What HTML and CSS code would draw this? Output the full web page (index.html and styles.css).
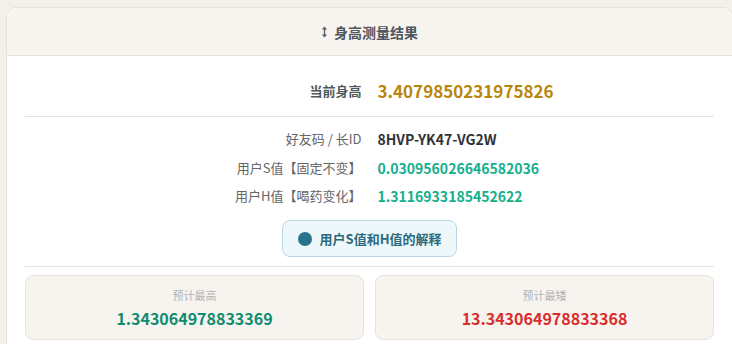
FILE: index.html
```html
<html lang="zh">
<head>
    <meta charset="UTF-8">
    <meta name="viewport" content="width=device-width, initial-scale=1.0">
    <title>身高测量结果</title>
    <link rel="stylesheet" href="styles.css">
</head>
<body>
    <div class="card">
        <div class="card-header">
            <svg class="title-icon" width="7" height="12" viewBox="0 0 7 12">
                <path d="M3.5 1.5 V10.5" stroke="#58626b" stroke-width="1.4"/>
                <path d="M0.8 3.6 L3.5 0.6 L6.2 3.6 Z" fill="#58626b"/>
                <path d="M0.8 8.4 L3.5 11.4 L6.2 8.4 Z" fill="#58626b"/>
            </svg>
            <span class="title">身高测量结果</span>
        </div>
        <div class="card-body">
            <div class="row row-main">
                <div class="label">当前身高</div>
                <div class="value gold">3.4079850231975826</div>
            </div>
            <hr class="divider">
            <div class="info">
                <div class="row">
                    <div class="label">好友码 / 长ID</div>
                    <div class="value dark">8HVP-YK47-VG2W</div>
                </div>
                <div class="row">
                    <div class="label">用户S值【固定不变】</div>
                    <div class="value teal">0.030956026646582036</div>
                </div>
                <div class="row">
                    <div class="label">用户H值【喝药变化】</div>
                    <div class="value teal">1.3116933185452622</div>
                </div>
            </div>
            <div class="button-wrap">
                <button class="explain-button"><span class="dot"></span>用户S值和H值的解释</button>
            </div>
            <hr class="divider">
            <div class="predict">
                <div class="predict-box">
                    <div class="predict-label">预计最高</div>
                    <div class="predict-value green">1.343064978833369</div>
                </div>
                <div class="predict-box">
                    <div class="predict-label">预计最矮</div>
                    <div class="predict-value red">13.343064978833368</div>
                </div>
            </div>
        </div>
    </div>
</body>
</html>
```

FILE: styles.css
```css
body {
    margin: 0;
    padding: 7px 0 0 6px;
    background: #f3f0eb;
    font-family: "Noto Sans CJK SC", "Noto Sans", sans-serif;
    overflow: hidden;
}

.card {
    width: 725px;
    background: white;
    border: 1px solid #e6e1d9;
    border-radius: 10px;
    overflow: hidden;
}

.card-header {
    height: 47px;
    display: flex;
    justify-content: center;
    align-items: center;
    gap: 6px;
    background: #f8f5f0;
    border-bottom: 1px solid #e6e1d9;
}

.title {
    font-size: 14px;
    font-weight: bold;
    color: #4d5760;
}

.card-body {
    padding: 20px 18px 30px 18px;
}

.row {
    display: grid;
    grid-template-columns: 1fr 1fr;
    column-gap: 16px;
    align-items: center;
    line-height: 20px;
}

.row-main {
    line-height: 30px;
}

.label {
    text-align: right;
    font-size: 13px;
    color: #666;
}

.row-main .label {
    font-weight: bold;
    color: #4d5760;
}

.value {
    font-weight: bold;
    font-size: 14px;
}

.row-main .value {
    font-size: 17px;
}

.gold {
    color: #b8860b;
}

.dark {
    color: #2f3338;
}

.teal {
    color: #13b08c;
}

.divider {
    border: none;
    border-top: 1px solid #e6e1d9;
    margin: 10px 0 0 0;
}

.info {
    display: flex;
    flex-direction: column;
    gap: 8.5px;
    margin-top: 12px;
}

.button-wrap {
    display: flex;
    justify-content: center;
    margin-top: 14px;
}

.explain-button {
    display: flex;
    align-items: center;
    gap: 8px;
    height: 37px;
    padding: 0 15px;
    background: #eef7fa;
    border: 1px solid #b7d9e4;
    border-radius: 8px;
    font-family: inherit;
    font-size: 13px;
    font-weight: bold;
    color: #2b6b80;
}

.dot {
    width: 14px;
    height: 14px;
    border-radius: 50%;
    background: #25738c;
}

.button-wrap + .divider {
    margin-top: 9px;
}

.predict {
    display: grid;
    grid-template-columns: 1fr 1fr;
    gap: 11px;
    margin-top: 8px;
}

.predict-box {
    background: #f7f4ef;
    border: 1px solid #e8e3dc;
    border-radius: 8px;
    padding: 11px 0 10px 0;
    text-align: center;
}

.predict-label {
    font-size: 11px;
    line-height: 16px;
    color: #aeb3b6;
}

.predict-value {
    margin-top: 4px;
    font-size: 16px;
    line-height: 22px;
    font-weight: bold;
}

.green {
    color: #0f8c6f;
}

.red {
    color: #d92d2d;
}
```
